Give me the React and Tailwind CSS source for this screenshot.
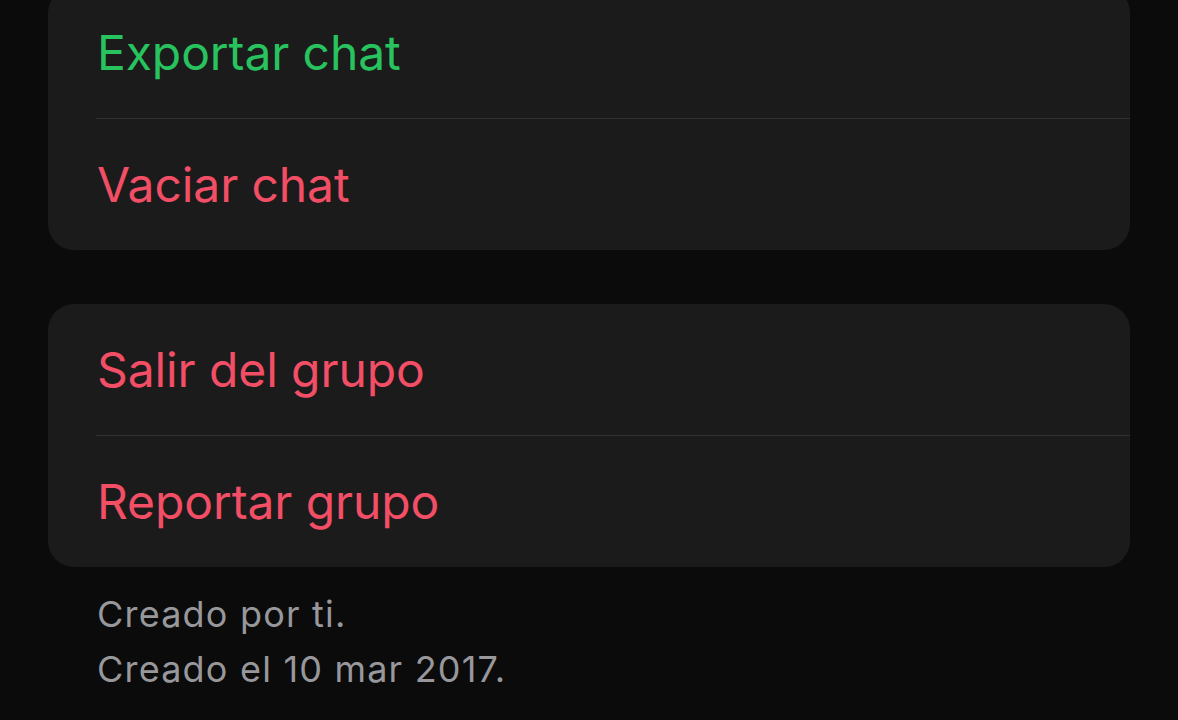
import React from 'react';

const Row = ({ label, color, divider }) => (
  <div>
    <div className={`h-[131px] flex items-center pl-[49px] text-[48px] tracking-[-0.1px] ${color}`}>
      {label}
    </div>
    {divider && <div className="ml-[48px] h-px bg-[#303032]"></div>}
  </div>
);

const App = () => {
  return (
    <div className="w-[1178px] h-[720px] overflow-hidden bg-[#0b0b0b] px-[48px] font-['Inter','Noto_Sans',sans-serif]">
      {/* Chat actions */}
      <div className="-mt-[13px] bg-[#1b1b1b] rounded-[26px] overflow-hidden">
        <Row label="Exportar chat" color="text-[#28c35f]" divider />
        <Row label="Vaciar chat" color="text-[#f24e66]" />
      </div>

      {/* Group actions */}
      <div className="mt-[54px] bg-[#1b1b1b] rounded-[26px] overflow-hidden">
        <Row label="Salir del grupo" color="text-[#f24e66]" divider />
        <Row label="Reportar grupo" color="text-[#f24e66]" />
      </div>

      <div className="pt-[20px] pl-[49px] text-[36px] leading-[55px] tracking-[1.2px] text-[#98989c]">
        <p>Creado por ti.</p>
        <p>Creado el 10 mar 2017.</p>
      </div>
    </div>
  );
};

export default App;
